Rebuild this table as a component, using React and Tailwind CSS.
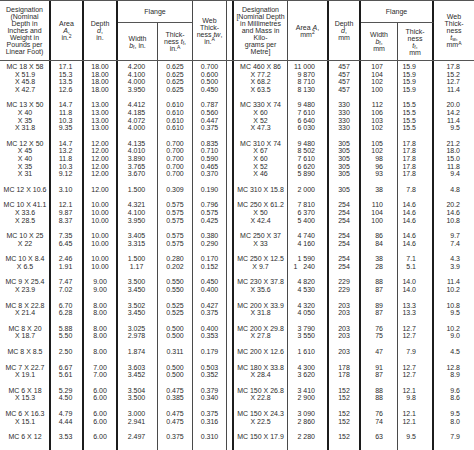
const THICK = "border-r-2 border-[#1c1c1c]";
const THIN = "border-r border-[#4a4a4a]";

// column look, left half | gap | right half
const cols = [
  { b: THICK, a: "text-center pl-[1px]" },
  { b: THICK, a: "text-center pr-[2px]" },
  { b: THICK, a: "text-center" },
  { b: THIN, a: "text-center pr-[2px]" },
  { b: THIN, a: "text-center" },
  { b: THIN, a: "text-center" },
  { b: THICK, a: "" },
  { b: THIN, a: "text-center" },
  { b: THICK, a: "text-right pr-[12px]" },
  { b: THICK, a: "text-center" },
  { b: THIN, a: "text-right pr-[14px]" },
  { b: THICK, a: "text-right pr-[16px]" },
  { b: "", a: "text-right pr-[14px]" },
];

const grid =
  "grid grid-cols-[51px_33px_34px_40px_35px_34px_7px_54px_41px_32px_37px_36px_40px]";

const groups = [
  [
    ["MC 18 X 58", "17.1", "18.00", "4.200", "0.625", "0.700", "MC 460 X 86", "11 000", "457", "107", "15.9", "17.8"],
    ["X 51.9", "15.3", "18.00", "4.100", "0.625", "0.600", "X 77.2", "9 870", "457", "104", "15.9", "15.2"],
    ["X 45.8", "13.5", "18.00", "4.000", "0.625", "0.500", "X 68.2", "8 710", "457", "102", "15.9", "12.7"],
    ["X 42.7", "12.6", "18.00", "3.950", "0.625", "0.450", "X 63.5", "8 130", "457", "100", "15.9", "11.4"],
  ],
  [
    ["MC 13 X 50", "14.7", "13.00", "4.412", "0.610", "0.787", "MC 330 X 74", "9 480", "330", "112", "15.5", "20.0"],
    ["X 40", "11.8", "13.00", "4.185", "0.610", "0.560", "X 60", "7 610", "330", "106", "15.5", "14.2"],
    ["X 35", "10.3", "13.00", "4.072", "0.610", "0.447", "X 52", "6 640", "330", "103", "15.5", "11.4"],
    ["X 31.8", "9.35", "13.00", "4.000", "0.610", "0.375", "X 47.3", "6 030", "330", "102", "15.5", "9.5"],
  ],
  [
    ["MC 12 X 50", "14.7", "12.00", "4.135", "0.700", "0.835", "MC 310 X 74", "9 480", "305", "105", "17.8", "21.2"],
    ["X 45", "13.2", "12.00", "4.010", "0.700", "0.710", "X 67", "8 502", "305", "102", "17.8", "18.0"],
    ["X 40", "11.8", "12.00", "3.890", "0.700", "0.590", "X 60", "7 610", "305", "98", "17.8", "15.0"],
    ["X 35", "10.3", "12.00", "3.765", "0.700", "0.465", "X 52", "6 620", "305", "96", "17.8", "11.8"],
    ["X 31", "9.12", "12.00", "3.670", "0.700", "0.370", "X 46", "5 890", "305", "93", "17.8", "9.4"],
  ],
  [
    ["MC 12 X 10.6", "3.10", "12.00", "1.500", "0.309", "0.190", "MC 310 X 15.8", "2 000", "305", "38", "7.8", "4.8"],
  ],
  [
    ["MC 10 X 41.1", "12.1", "10.00", "4.321", "0.575", "0.796", "MC 250 X 61.2", "7 810", "254", "110", "14.6", "20.2"],
    ["X 33.6", "9.87", "10.00", "4.100", "0.575", "0.575", "X 50", "6 370", "254", "104", "14.6", "14.6"],
    ["X 28.5", "8.37", "10.00", "3.950", "0.575", "0.425", "X 42.4", "5 400", "254", "100", "14.6", "10.8"],
  ],
  [
    ["MC 10 X 25", "7.35", "10.00", "3.405", "0.575", "0.380", "MC 250 X 37", "4 740", "254", "86", "14.6", "9.7"],
    ["X 22", "6.45", "10.00", "3.315", "0.575", "0.290", "X 33", "4 160", "254", "84", "14.6", "7.4"],
  ],
  [
    ["MC 10 X 8.4", "2.46", "10.00", "1.500", "0.280", "0.170", "MC 250 X 12.5", "1 590", "254", "38", "7.1", "4.3"],
    ["X 6.5", "1.91", "10.00", "1.17", "0.202", "0.152", "X 9.7", "1   240", "254", "28", "5.1", "3.9"],
  ],
  [
    ["MC 9 X 25.4", "7.47", "9.00", "3.500", "0.550", "0.450", "MC 230 X 37.8", "4 820", "229", "88", "14.0", "11.4"],
    ["X 23.9", "7.02", "9.00", "3.450", "0.550", "0.400", "X 35.6", "4 530", "229", "87", "14.0", "10.2"],
  ],
  [
    ["MC 8 X 22.8", "6.70", "8.00", "3.502", "0.525", "0.427", "MC 200 X 33.9", "4 320", "203", "89", "13.3", "10.8"],
    ["X 21.4", "6.28", "8.00", "3.450", "0.525", "0.375", "X 31.8", "4 050", "203", "87", "13.3", "9.5"],
  ],
  [
    ["MC 8 X 20", "5.88", "8.00", "3.025", "0.500", "0.400", "MC 200 X 29.8", "3 790", "203", "76", "12.7", "10.2"],
    ["X 18.7", "5.50", "8.00", "2.978", "0.500", "0.353", "X 27.8", "3 550", "203", "75", "12.7", "9.0"],
  ],
  [
    ["MC 8 X 8.5", "2.50", "8.00", "1.874", "0.311", "0.179", "MC 200 X 12.6", "1 610", "203", "47", "7.9", "4.5"],
  ],
  [
    ["MC 7 X 22.7", "6.67", "7.00", "3.603", "0.500", "0.503", "MC 180 X 33.8", "4 300", "178", "91", "12.7", "12.8"],
    ["X 19.1", "5.61", "7.00", "3.452", "0.500", "0.352", "X 28.4", "3 620", "178", "87", "12.7", "8.9"],
  ],
  [
    ["MC 6 X 18", "5.29", "6.00", "3.504", "0.475", "0.379", "MC 150 X 26.8", "3 410", "152", "88", "12.1", "9.6"],
    ["X 15.3", "4.50", "6.00", "3.500", "0.385", "0.340", "X 22.8", "2 900", "152", "88", "9.8", "8.6"],
  ],
  [
    ["MC 6 X 16.3", "4.79", "6.00", "3.000", "0.475", "0.375", "MC 150 X 24.3", "3 090", "152", "76", "12.1", "9.5"],
    ["X 15.1", "4.44", "6.00", "2.941", "0.475", "0.316", "X 22.5", "2 860", "152", "74", "12.1", "8.0"],
  ],
  [
    ["MC 6 X 12", "3.53", "6.00", "2.497", "0.375", "0.310", "MC 150 X 17.9", "2 280", "152", "63", "9.5", "7.9"],
  ],
];

function Spacer({ h }) {
  return (
    <div className={grid} style={{ height: h }}>
      {cols.map((c, i) => (
        <div key={i} className={c.b} />
      ))}
    </div>
  );
}

function Row({ values }) {
  const cells = [...values.slice(0, 6), "", ...values.slice(6)];
  return (
    <div className={`${grid} h-[7.6px] leading-[7.6px]`}>
      {cells.map((v, i) => (
        <div key={i} className={`${cols[i].b} ${cols[i].a} whitespace-pre`}>
          {v}
        </div>
      ))}
    </div>
  );
}

function H({ className = "", children }) {
  return (
    <div className={`flex flex-col items-center justify-center text-center leading-[7px] ${className}`}>
      {children}
    </div>
  );
}

export default function App() {
  return (
    <div
      className="w-[474px] h-[450px] overflow-hidden bg-white text-[7px] text-[#2b2b2b]"
      style={{ fontFamily: '"Liberation Sans", Arial, sans-serif' }}
    >
      <div className={`${grid} grid-rows-[22px_37px] border-t border-b border-[#555]`}>
        <H className={`row-span-2 ${THICK}`}>
          <span>Designation</span>
          <span>(Nominal</span>
          <span>Depth in</span>
          <span>Inches and</span>
          <span>Weight in</span>
          <span>Pounds per</span>
          <span>Linear Foot)</span>
        </H>
        <H className={`row-span-2 ${THICK}`}>
          <span>Area</span>
          <span><i>A</i>,</span>
          <span>in.<sup className="text-[5px]">2</sup></span>
        </H>
        <H className={`row-span-2 ${THICK}`}>
          <span>Depth</span>
          <span><i>d</i>,</span>
          <span>in.</span>
        </H>
        <H className={`col-span-2 ${THIN} border-b border-b-[#555]`}>
          <span>Flange</span>
        </H>
        <H className={`row-span-2 ${THIN}`}>
          <span>Web</span>
          <span>Thick-</span>
          <span>ness <i>tw</i>,</span>
          <span>in.<sup className="text-[5px]">A</sup></span>
        </H>
        <div className={`row-span-2 ${THICK}`} />
        <H className={`row-span-2 ${THIN}`}>
          <span>Designation</span>
          <span>[Nominal Depth</span>
          <span>in Millimetres</span>
          <span>and Mass in Kilo-</span>
          <span>grams per</span>
          <span>Metre]</span>
        </H>
        <H className={`row-span-2 ${THICK}`}>
          <span>Area <i>A</i>,</span>
          <span>mm<sup className="text-[5px]">2</sup></span>
        </H>
        <H className={`row-span-2 ${THICK}`}>
          <span>Depth</span>
          <span><i>d</i>,</span>
          <span>mm</span>
        </H>
        <H className={`col-span-2 ${THICK} border-b border-b-[#555]`}>
          <span>Flange</span>
        </H>
        <H className="row-span-2">
          <span>Web</span>
          <span>Thick-</span>
          <span>ness</span>
          <span><i>t</i><sub className="text-[5px]">w</sub>,</span>
          <span>mm<sup className="text-[5px]">A</sup></span>
        </H>
        <H className={THIN}>
          <span>Width</span>
          <span><i>b</i><sub className="text-[5px]">f</sub>, in.</span>
        </H>
        <H className={THIN}>
          <span>Thick-</span>
          <span>ness <i>t</i><sub className="text-[5px]">f</sub>,</span>
          <span>in.<sup className="text-[5px]">A</sup></span>
        </H>
        <H className={THIN}>
          <span>Width</span>
          <span><i>b</i><sub className="text-[5px]">f</sub>,</span>
          <span>mm</span>
        </H>
        <H className={THICK}>
          <span>Thick-</span>
          <span>ness</span>
          <span><i>t</i><sub className="text-[5px]">f</sub>,</span>
          <span>mm</span>
        </H>
      </div>

      <Spacer h={2} />
      {groups.map((g, gi) => (
        <div key={gi}>
          {gi > 0 && <Spacer h={8} />}
          {g.map((r, ri) => (
            <Row key={ri} values={r} />
          ))}
        </div>
      ))}
      <Spacer h={20} />
    </div>
  );
}
